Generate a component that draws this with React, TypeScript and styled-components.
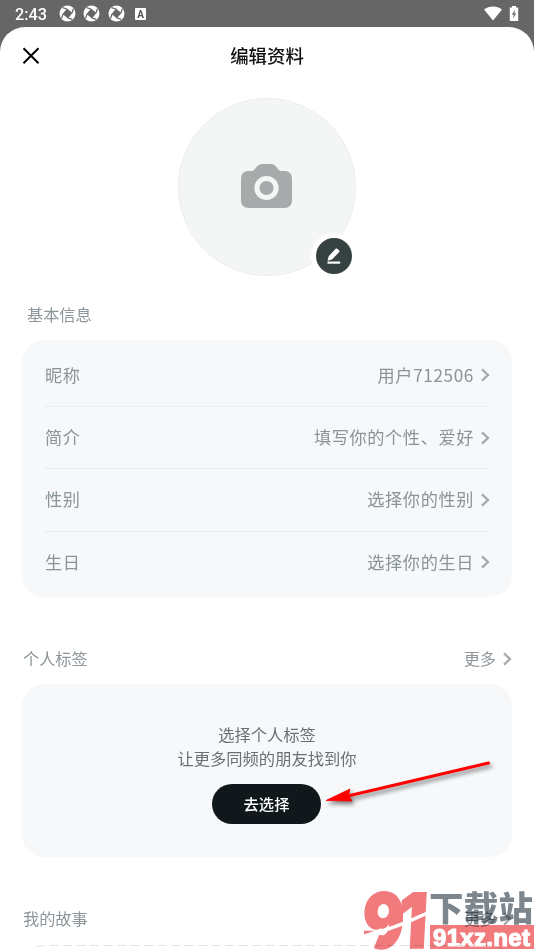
import React from 'react';
import styled, { createGlobalStyle } from 'styled-components';

const GlobalStyle = createGlobalStyle`
  * {
    box-sizing: border-box;
  }
  body {
    margin: 0;
    background: #666;
    font-family: 'Noto Sans CJK SC', 'Noto Sans', sans-serif;
  }
  svg {
    display: block;
    flex: none;
  }
`;

const Screen = styled.div`
  position: relative;
  width: 534px;
  height: 950px;
  overflow: hidden;
  display: flex;
  flex-direction: column;
  background: #666;
`;

const StatusBar = styled.div`
  height: 27px;
  flex: none;
  display: flex;
  align-items: center;
  justify-content: space-between;
  padding: 0 15px 0 15px;
  color: #fff;
`;

const StatusGroup = styled.div<{ $gap: number }>`
  display: flex;
  align-items: center;
  gap: ${(p) => p.$gap}px;
`;

const Clock = styled.span`
  width: 35px;
  margin-right: 1px;
  padding-top: 1px;
  font: 500 16.3px/27px Roboto, sans-serif;
`;

const Sheet = styled.main`
  flex: 1;
  background: #fff;
  border-radius: 25px 25px 0 0;
  padding: 0 22px;
`;

const TitleBar = styled.header`
  height: 58px;
  display: grid;
  grid-template-columns: 18px 1fr 18px;
  align-items: center;
`;

const Title = styled.h1`
  margin: 0;
  padding-bottom: 2px;
  text-align: center;
  font-size: 18.4px;
  line-height: 28px;
  font-weight: 500;
  color: #111;
`;

const Avatar = styled.div`
  position: relative;
  width: 178px;
  height: 178px;
  margin: 13px auto 0;
  padding: 0 1px 2px 0;
  border-radius: 50%;
  border: 1px solid #ebeeee;
  background: #f4f6f6;
  display: flex;
  align-items: center;
  justify-content: center;
`;

const EditBadge = styled.div`
  position: absolute;
  left: 132px;
  top: 134px;
  width: 46px;
  height: 46px;
  border: 5px solid #fff;
  border-radius: 50%;
  background: #364141;
  display: flex;
  align-items: center;
  justify-content: center;
`;

const SectionHead = styled.div<{ $top: number; $indent?: number }>`
  margin-top: ${(p) => p.$top}px;
  padding-left: ${(p) => p.$indent ?? 1}px;
  height: 24px;
  display: flex;
  align-items: center;
  justify-content: space-between;
  font-size: 16.2px;
  line-height: 24px;
  color: #8e969b;
`;

const Label = styled.span`
  padding-bottom: 2px;
`;

const More = styled.span`
  display: flex;
  align-items: center;
  gap: 6px;
`;

const Card = styled.section`
  margin-top: 13px;
  border-radius: 22px;
  background: #f6f8fa;
`;

const InfoCard = styled(Card)`
  height: 257px;
  padding: 4px 22px;
`;

const Row = styled.div`
  height: 62.2px;
  display: flex;
  align-items: center;
  justify-content: space-between;
  padding-left: 1px;
  font-size: 17.2px;
  letter-spacing: 0.6px;
  color: #8b9499;
  & + & {
    border-top: 1px solid #ebeeef;
  }
`;

const Value = styled.span`
  display: flex;
  align-items: center;
  gap: 6px;
`;

const TagCard = styled(Card)`
  height: 173px;
  margin-top: 13px;
  padding-top: 38px;
  display: flex;
  flex-direction: column;
  align-items: center;
  font-size: 16.3px;
  line-height: 24px;
  color: #697176;
`;

const PickButton = styled.button`
  width: 109px;
  height: 40px;
  margin: 14px 1px 0 0;
  padding: 0 0 3px;
  border: 0;
  border-radius: 20px;
  background: #11181b;
  color: #fff;
  font: 500 15.3px/24px 'Noto Sans CJK SC', sans-serif;
`;

const StoryFrame = styled.div`
  margin-top: 13px;
`;

const ArrowMark = styled.svg`
  position: absolute;
  left: 320px;
  top: 752px;
  filter: drop-shadow(2px 3px 2px rgba(0, 0, 0, 0.5));
`;

const Watermark = styled.svg`
  position: absolute;
  left: 360px;
  top: 886px;
  mix-blend-mode: multiply;
`;

const Chevron = () => (
  <svg width="10" height="14" viewBox="0 0 10 14" fill="none">
    <path d="M2 1.4 8 7 2 12.6" stroke="#a6a9ab" strokeWidth="2.3" />
  </svg>
);

const Aperture = () => (
  <svg width="17" height="17" viewBox="0 0 17 17">
    <circle cx="8.5" cy="8.5" r="8" fill="#fff" />
    <path d="M8 3.6 13.4 8 9 13.4 3.6 9Z" fill="#666" />
    <path
      d="M8 4 3.6 2.6M13 8l1.4-4.400M9 13l4.400 1.400M4 9l-1.400 4.400"
      stroke="#666"
      strokeWidth="1.3"
    />
  </svg>
);

const Camera = () => (
  <svg width="51" height="44" viewBox="0 0 50 44" preserveAspectRatio="none">
    <path
      d="M7 7h3.5c1.5 0 2.5-1.2 4-3C16.5 1.2 18 0 21 0h8c3 0 4.5 1.2 6.5 4 1.5 1.8 2.5 3 4 3H43a7 7 0 0 1 7 7v23a7 7 0 0 1-7 7H7a7 7 0 0 1-7-7V14a7 7 0 0 1 7-7Z"
      fill="#a7abab"
    />
    <circle cx="25" cy="24" r="9.4" fill="none" stroke="#f4f6f6" strokeWidth="5" />
  </svg>
);

const Pencil = () => (
  <svg width="14" height="17" viewBox="0 0 14 17" fill="#fff">
    <path d="M.6 12.8 1.7 8.3 8.4.9c.7-.7 1.6-.6 2.2 0l1.4 1.3c.7.7.6 1.5 0 2.1L5 11.6Z" />
    <path d="M.5 13.5h12.7v2.2H.5z" />
  </svg>
);

const rows = [
  { label: '昵称', value: '用户712506' },
  { label: '简介', value: '填写你的个性、爱好' },
  { label: '性别', value: '选择你的性别' },
  { label: '生日', value: '选择你的生日' },
];

const App = () => {
  return (
    <Screen>
      <GlobalStyle />
      <StatusBar>
        <StatusGroup $gap={7.5}>
          <Clock>2:43</Clock>
          <Aperture />
          <Aperture />
          <Aperture />
          <svg width="17" height="12" viewBox="0 0 17 12">
            <rect x="3" width="11" height="12" rx="1" fill="#fff" />
            <text
              x="8.5"
              y="9.5"
              textAnchor="middle"
              fontFamily="Roboto, sans-serif"
              fontWeight="700"
              fontSize="10"
              fill="#555"
            >
              A
            </text>
          </svg>
        </StatusGroup>
        <StatusGroup $gap={7}>
          <svg width="18" height="15" viewBox="0 0 18 15">
            <path d="M0 3.5C5-.6 13-.6 18 3.5L9 14.5Z" fill="#fff" />
          </svg>
          <svg width="10" height="15" viewBox="0 0 10 15">
            <path d="M3 0h4v1.5h2.2V15H.8V1.5H3Z" fill="#fff" />
            <path d="M6 3.8 2.8 8.6h1.9L4 12.5l3.2-5H5.3Z" fill="#666" />
          </svg>
        </StatusGroup>
      </StatusBar>

      <Sheet>
        <TitleBar>
          <svg width="18" height="18" viewBox="0 0 18 18">
            <path
              d="m1.5 1.2 15 15M16.5 1.2l-15 15"
              stroke="#000"
              strokeWidth="2"
            />
          </svg>
          <Title>编辑资料</Title>
        </TitleBar>

        <Avatar>
          <Camera />
          <EditBadge>
            <Pencil />
          </EditBadge>
        </Avatar>

        <SectionHead $top={27} $indent={5}>
          <Label>基本信息</Label>
        </SectionHead>
        <InfoCard>
          {rows.map((row) => (
            <Row key={row.label}>
              <Label>{row.label}</Label>
              <Value>
                <Label>{row.value}</Label>
                <Chevron />
              </Value>
            </Row>
          ))}
        </InfoCard>

        <SectionHead $top={50}>
          <Label>个人标签</Label>
          <More>
            <Label>更多</Label>
            <Chevron />
          </More>
        </SectionHead>
        <TagCard>
          <span>选择个人标签</span>
          <span>让更多同频的朋友找到你</span>
          <PickButton>去选择</PickButton>
        </TagCard>

        <SectionHead $top={50}>
          <Label>我的故事</Label>
          <More>
            <Label>更多</Label>
            <Chevron />
          </More>
        </SectionHead>
        <StoryFrame>
          <svg width="490" height="60" viewBox="0 0 490 60" fill="none">
            <path
              d="M.5 60V23.5a22 22 0 0 1 22-22H467.5a22 22 0 0 1 22 22V60"
              stroke="#dfe5e5"
              strokeDasharray="9 4.5"
              strokeDashoffset="5"
            />
          </svg>
        </StoryFrame>
      </Sheet>

      <ArrowMark width="180" height="60" viewBox="0 0 180 60">
        <path d="M30 43.5 168.5 11" stroke="#f00" strokeWidth="3" strokeLinecap="round" />
        <path d="M6 48.5 30 37l-1.500 6.500 3.500 5.500Z" fill="#f00" stroke="#f00" strokeWidth=".8" />
      </ArrowMark>

      <Watermark width="174" height="64" viewBox="0 0 174 64">
        <g
          fill="#f17a7c"
          stroke="#f17a7c"
          strokeWidth="1.5"
          fontFamily="Inter, sans-serif"
          fontWeight="900"
          fontSize="76"
        >
          <text transform="translate(1 62) skewX(-3) scale(.82 1)">9</text>
          <text transform="translate(37 62) skewX(-3) scale(.85 1)">1</text>
        </g>
        <path d="M0 50 22 42 13 64H0Z" fill="#fff" />
        <path d="M6 48C26 43 48 34 68 25v3.500C46 39 28 46 6 51Z" fill="#fff" />
        <text
          x="69"
          y="35"
          fontFamily="'Noto Sans CJK SC', sans-serif"
          fontWeight="900"
          fontSize="34.5"
          textLength="104"
          fill="#7d868d"
        >
          下载站
        </text>
        <rect x="70" y="39" width="104" height="24" fill="#f17a7c" />
        <text
          x="73"
          y="60"
          fontFamily="'Liberation Sans Narrow', 'Liberation Sans', sans-serif"
          fontWeight="700"
          fontSize="24"
          textLength="97"
          fill="#fff"
          stroke="#fff"
          strokeWidth="1.2"
        >
          91xz.net
        </text>
      </Watermark>
    </Screen>
  );
};

export default App;
